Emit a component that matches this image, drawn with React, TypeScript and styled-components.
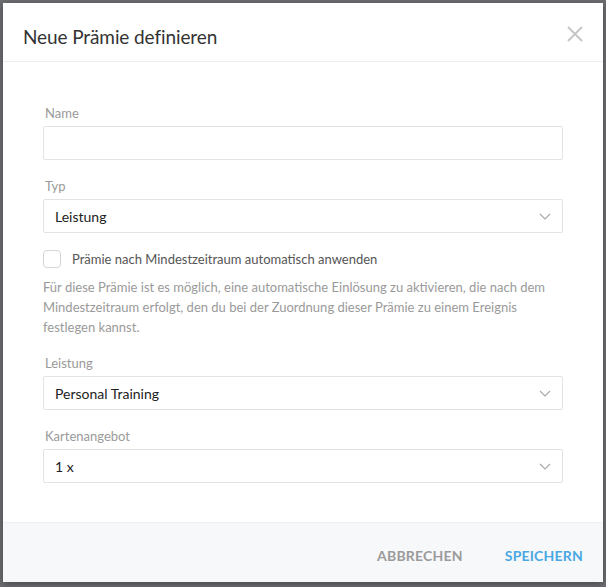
import styled, { createGlobalStyle } from "styled-components";

const GlobalStyle = createGlobalStyle`
  html, body {
    margin: 0;
    padding: 0;
    background: #6f7073;
    font-family: Lato, "Open Sans", sans-serif;
  }
  * { box-sizing: border-box; }
`;

const Backdrop = styled.div`
  width: 606px;
  height: 587px;
  padding: 3px 3px 5px 3px;
  background: #6d6e71;
`;

const Dialog = styled.div`
  display: flex;
  flex-direction: column;
  height: 100%;
  background: #fff;
  box-shadow: 0 2px 8px rgba(0, 0, 0, 0.35);
`;

const Header = styled.div`
  display: flex;
  align-items: center;
  justify-content: space-between;
  height: 59px;
  padding: 9px 20px 0 20px;
  border-bottom: 1px solid #ececec;
`;

const Title = styled.h2`
  margin: 0;
  font-size: 19px;
  font-weight: 400;
  color: #333;
  letter-spacing: -0.1px;
`;

const CloseButton = styled.button`
  display: flex;
  border: 0;
  background: none;
  padding: 0;
  margin-top: -6px;
  cursor: pointer;
`;

const Body = styled.div`
  flex: 1;
  display: flex;
  flex-direction: column;
  padding: 41px 40px 0 40px;
`;

const Field = styled.div`
  display: flex;
  flex-direction: column;
  margin-bottom: 16px;
`;

const Label = styled.label`
  font-size: 13px;
  line-height: 20px;
  color: #9a9a9a;
  padding-left: 2px;
  margin-bottom: 3px;
`;

const Input = styled.input`
  height: 34px;
  border: 1px solid #e3e3e3;
  border-radius: 2px;
  padding: 0 11px;
  font: inherit;
  font-size: 14px;
  outline: none;
`;

const SelectBox = styled.div`
  display: flex;
  align-items: center;
  justify-content: space-between;
  height: 34px;
  border: 1px solid #e3e3e3;
  border-radius: 2px;
  padding: 0 11px 0 11px;
  font-size: 14px;
  color: #222;
`;

const CheckRow = styled.label`
  display: flex;
  align-items: center;
  gap: 11px;
  margin-top: 1px;
  font-size: 13px;
  color: #555;
`;

const Box = styled.span`
  width: 18px;
  height: 18px;
  border: 1px solid #d6d6d6;
  border-radius: 4px;
  background: #fff;
`;

const Hint = styled.p`
  margin: 9px 0 16px 0;
  font-size: 13px;
  line-height: 20px;
  color: #9a9a9a;
`;

const Footer = styled.div`
  display: flex;
  justify-content: flex-end;
  align-items: center;
  gap: 42px;
  height: 60px;
  padding: 6px 20px 0 0;
  background: #f7f8fa;
  border-top: 1px solid #eef0f2;
`;

const TextButton = styled.button<{ $primary?: boolean }>`
  border: 0;
  background: none;
  padding: 0;
  font-family: inherit;
  font-size: 14px;
  font-weight: 700;
  letter-spacing: 0.2px;
  color: ${(p) => (p.$primary ? "#4aa8e2" : "#9b9b9b")};
  cursor: pointer;
`;

function Chevron() {
  return (
    <svg width="12" height="7" viewBox="0 0 12 7" fill="none">
      <path d="M1 1l5 5 5-5" stroke="#a8a8a8" strokeWidth="1.1" />
    </svg>
  );
}

function Select({ value }: { value: string }) {
  return (
    <SelectBox>
      <span>{value}</span>
      <Chevron />
    </SelectBox>
  );
}

export default function App() {
  return (
    <>
      <GlobalStyle />
      <Backdrop>
        <Dialog>
          <Header>
            <Title>Neue Prämie definieren</Title>
            <CloseButton aria-label="Schließen">
              <svg width="16" height="16" viewBox="0 0 16 16">
                <path d="M1 1l14 14M15 1L1 15" stroke="#c4c4c4" strokeWidth="1.8" />
              </svg>
            </CloseButton>
          </Header>
          <Body>
            <Field>
              <Label>Name</Label>
              <Input />
            </Field>
            <Field>
              <Label>Typ</Label>
              <Select value="Leistung" />
            </Field>
            <CheckRow>
              <Box />
              Prämie nach Mindestzeitraum automatisch anwenden
            </CheckRow>
            <Hint>
              Für diese Prämie ist es möglich, eine automatische Einlösung zu aktivieren, die nach dem
              Mindestzeitraum erfolgt, den du bei der Zuordnung dieser Prämie zu einem Ereignis
              festlegen kannst.
            </Hint>
            <Field>
              <Label>Leistung</Label>
              <Select value="Personal Training" />
            </Field>
            <Field>
              <Label>Kartenangebot</Label>
              <Select value="1 x" />
            </Field>
          </Body>
          <Footer>
            <TextButton>ABBRECHEN</TextButton>
            <TextButton $primary>SPEICHERN</TextButton>
          </Footer>
        </Dialog>
      </Backdrop>
    </>
  );
}
